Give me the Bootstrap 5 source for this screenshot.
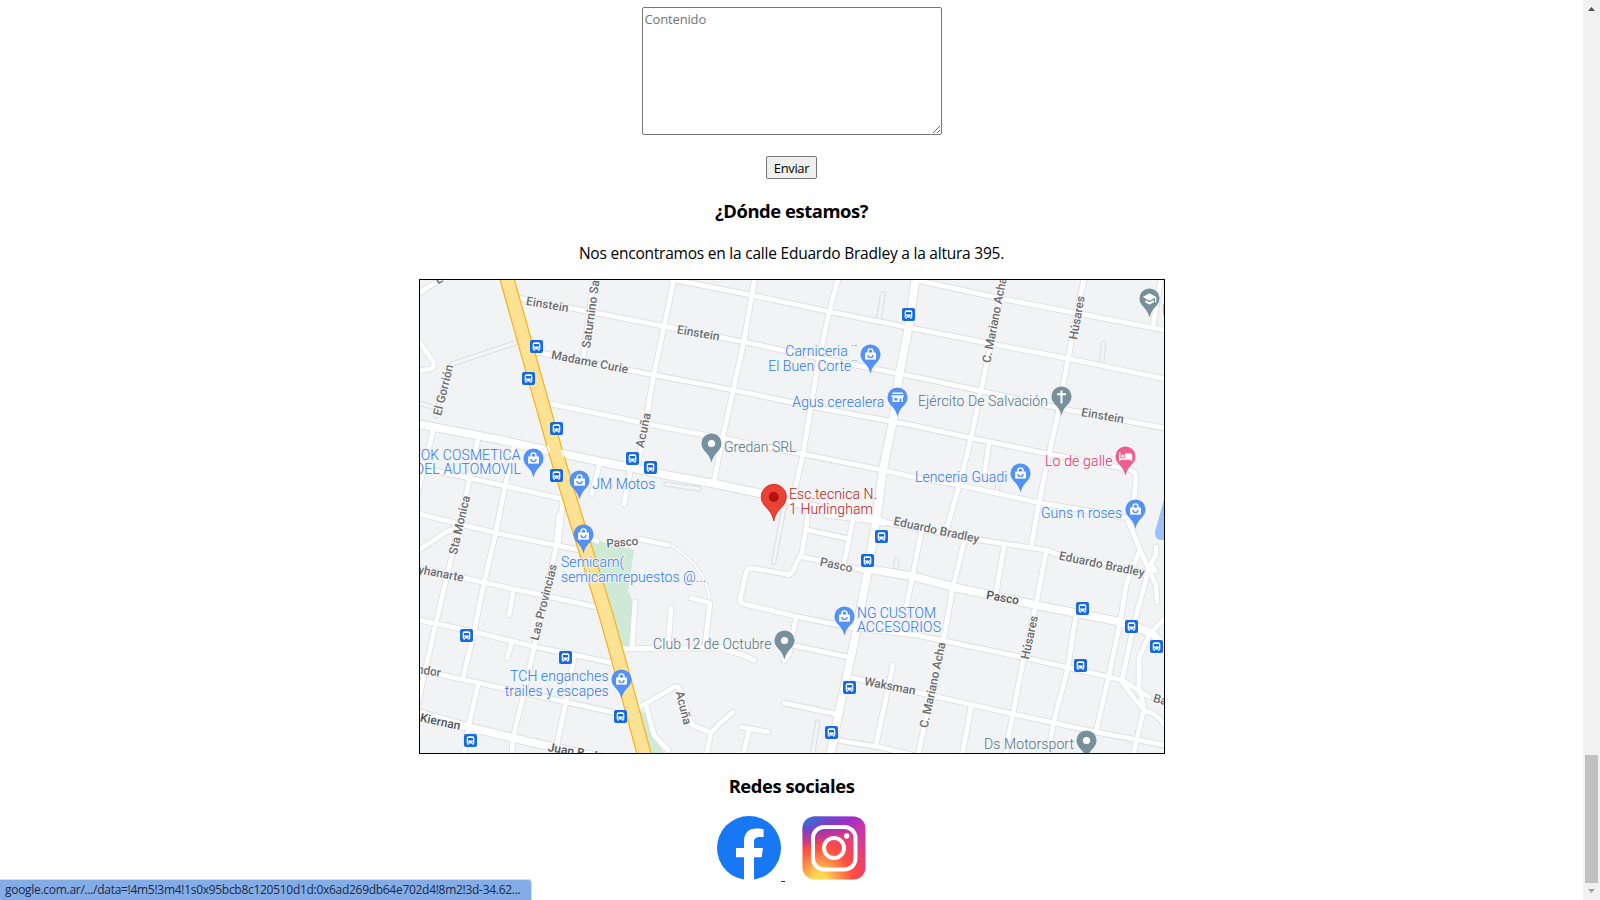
<!DOCTYPE html>
<html lang="es">
<head>
<meta charset="utf-8">
<meta name="viewport" content="width=device-width, initial-scale=1">
<title>Contacto</title>
<link href="https://cdn.jsdelivr.net/npm/bootstrap@5.3.0/dist/css/bootstrap.min.css" rel="stylesheet">
<style>
  body { font-family: "Open Sans", "Noto Sans", sans-serif; font-size: 16px; color: #000; background: #fff; height: 900px; }
  .message-box { width: 300px; height: 128px; margin-top: 7px; padding: 2px; border: 1px solid #767676; border-radius: 2px; font-size: 13px; line-height: 18px; letter-spacing: -.15px; resize: both; }
  .message-box::placeholder { color: #757575; }
  .send-btn { width: 51px; height: 23px; margin-top: 21px; border: 1px solid #767676; border-radius: 2px; background: #efefef; font-size: 13px; line-height: 20px; letter-spacing: -.35px; padding: 1px 0 0; color: #000; }
  .section-title { font-size: 18.4px; font-weight: 700; line-height: 25px; letter-spacing: -.43px; margin: 19px 0 0; }
  .address { font-size: 15.5px; line-height: 21px; letter-spacing: -.22px; margin: 20px 0 15px; }
  .map-frame { width: 746px; height: 475px; border: 1px solid #000; }
  .socials { margin-top: 18px; }
  .link-gap { width: 21px; height: 66px; }
  .link-gap i { width: 4px; height: 1px; background: #551a8b; }
  .scroll-track { width: 17px; background: #f1f1f1; }
  .scroll-thumb { width: 13px; height: 128px; background: #c1c1c1; }
  .url-status { width: 532px; height: 21px; background: #84ade8; border-top: 1px solid #d6d9e0; border-right: 1px solid #d6d9e0; border-radius: 0 4px 0 0; font-size: 12px; line-height: 20px; padding-left: 5px; color: #1d2940; white-space: nowrap; letter-spacing: -.29px; }
  .roads { fill: none; stroke-linecap: round; stroke-linejoin: round; }
  .poi { font: 300 14px Roboto, sans-serif; paint-order: stroke; stroke: #f1f3f4; stroke-width: 2px; stroke-linejoin: round; }
  .street { font: 500 12px Roboto, sans-serif; fill: #6a6c70; text-anchor: middle; paint-order: stroke; stroke: #f7f8f9; stroke-width: 2px; stroke-linejoin: round; }
  .street .main { fill: #505256; }
</style>
</head>
<body class="d-flex overflow-hidden">
<main class="flex-grow-1 d-flex flex-column align-items-center">
  <textarea class="message-box d-block" placeholder="Contenido"></textarea>
  <button class="send-btn" type="button">Enviar</button>
  <h3 class="section-title">¿Dónde estamos?</h3>
  <p class="address">Nos encontramos en la calle Eduardo Bradley a la altura 395.</p>
  <a class="map-frame d-block" href="#">
  <svg class="d-block" width="744" height="473" viewBox="420 280 744 473">
    <defs>
      <g id="service">
        <path d="M436 416Q442 385 452 364L516 342.7M419 403L436 408M882.7 294L879 319M1103.7 343L1101.7 363M999 476L997 491M666 484L699 489M784 508L773.7 562M896.7 560L896 567M817.7 722L812.7 753"/>
      </g>
      <g id="minor">
        <path d="M519 298L666 326.7L744 342L819 358L916 377L981 391L1063 409L1164 428"/>
        <path d="M670 279L753 295.5L831 312L916 329L1068 358.7L1164 378.7M920 281L1003 299L1164 330"/>
        <path d="M536 352L654 375L733 390L809 406L916 426L971 438L1049 454L1127 469Q1137 471 1136 480L1133 509"/>
        <path d="M549 403.7L666 427.7L803 454L882 470L916 477.7L959 485L1039 502.7L1089 511L1127 518L1141 552L1149 570L1156 585L1157 602"/>
        <path d="M1156 547V555L1151 563L1155 571L1149 570"/>
        <path d="M419 467.7L469 478L563 499L558 545M419 514L496 533L579 550M419 550L446 532L458 527"/>
        <path d="M419 568L486 583L549 596.7L596 607M419 620L473 631.7L536 647L613 663M419 670L479 683L566 702L616 713"/>
        <path d="M433 431L418 492M478 439L464 505L449 568L436 623L422.7 681L418 703M513 449L499 516L496 532L484 583L474 632L463 678"/>
        <path d="M478 685L468 728L464 756M559 515L556 548L534 648L523 697L513 738L512 756M574 658L566 702L556 748"/>
        <path d="M594 279L583 359M674 279L654 374L646 419L638 464M754.5 279L744 341L733 391L723 436L714 482M838 279L829 313L819 358L811 406L803 454L791 508"/>
        <path d="M1004.5 279L981 391L971 438L959 486L945 535M964 542L953 587L943 642L918 755M922 529L904 618"/>
        <path d="M1084 279L1068 359L1059 409L1049 454L1039 503L1031 547M1046 552L1036 605L1023 662L1013 713L1005 756M1004 547L996 593"/>
        <path d="M1076 615L1068 667L1053 725L1048 756M1147 575L1133 628L1122 680M1139 552L1126 585L1121 618L1109 675L1096 732M1161 279L1153 326"/>
        <path d="M883 522L979 540L1046 550L1059 555L1146 573M803 557L863 570M826 515L883 522"/>
        <path d="M1166 617L1149 635L1139 658V688L1144 708L1133 756M849 627L916 635L1026 658L1122 680L1149 697M1122 682L1134 698L1146 712Q1155 711 1166 727"/>
        <path d="M853 678L916 692L1013 714L1096 732L1164 745M971 707L962 756M836 740L879 747L916 756M893 665L876 745M784 703L836 714"/>
        <path d="M809 508L802 553Q795 565 793 571Q790 576 786 574L751 568Q747 568 746 573L740 599Q740 603 744 604L799 617L849 627"/>
        <path d="M808 530L849 539M853 520L844 563M796 617L791 643L789 654L784 661M791 645L848 657"/>
        <path d="M590 538L597 541M639 539L668 545M691 598L710 603L705 645M622 649L666 648L722 648Q730 652 743 655L754 660M635 602L632 648M671 608L668 648"/>
        <path d="M638 708L674 687Q679 685 681 693L692 725L711 733L706 756M733 712L719 724L711 733M741 727L768 732M749 730L743 756M646 705L654 735L668 750"/>
        <path d="M513 593L509 615M511 645L507 658M989 443L985 471M599 466L592 494M630 473L624 504M419 293L441 279M415 336L433 361Q436 367 430 369L415 372"/>
      </g>
      <g id="major">
        <path d="M418 424L496 439L559 453L666 475L716 484L763 494L800 504L883 522"/>
        <path d="M916 276L909 326L899 376L893 421L883 469L876 522L867 575L853 648L839 712L830 756"/>
        <path d="M863 568L916 577L953 587L1036 605L1116 621L1136 627L1152 633L1161 643M418 713L463 725.7L513 738L566 750L600 757"/>
      </g>
      <g id="bus">
        <rect x="-6.5" y="-6.5" width="13" height="13" rx="2" fill="#1769e0"/>
        <path d="M-3.8 3V-2.5Q-3.8-4.2-2-4.2H2Q3.8-4.2 3.8-2.5V3H3V4.3H1.7V3H-1.7V4.3H-3V3Z" fill="#fff"/>
        <path d="M-2.6-2.5H2.6V.1H-2.6ZM-2.6 1.2H-1.4V2.2H-2.6ZM1.4 1.2H2.6V2.2H1.4Z" fill="#1769e0"/>
      </g>
      <path id="pin" d="M0 19C-1.6 13-4 10.5-7.3 7A10.1 10.1 0 1 1 7.3 7C4 10.5 1.6 13 0 19Z"/>
      <g id="bag">
        <use href="#pin" fill="#5491f5"/>
        <path d="M-5.4-2H5.4V5.1H-5.4Z" fill="#fff"/>
        <path d="M-2.5-1.5V-3.1A2.5 2.5 0 0 1 2.5-3.1V-1.5" fill="none" stroke="#fff" stroke-width="1.4"/>
        <path d="M-2.5.6A2.5 2.5 0 0 0 2.5.6" fill="none" stroke="#5491f5" stroke-width="1.4"/>
      </g>
      <g id="dot"><use href="#pin" fill="#78909c"/><circle r="3.6" fill="#fff"/></g>
    </defs>

    <rect x="420" y="280" width="744" height="473" fill="#f1f3f4"/>
    <path d="M588 538L634 550L628 591L633 602L629 647H617ZM640 709L646 715L655 740L665 754H645Z" fill="#ceead6"/>
    <path d="M1166 492L1155 532Q1155 540 1161 540H1166Z" fill="#9cc0f9"/>

    <g class="roads">
      <path d="M666 544Q675 545 694 564Q709 582 710 602" stroke="#dfe1e5" stroke-width="3.6"/>
      <path d="M666 544Q675 545 694 564Q709 582 710 602" stroke="#fff" stroke-width="2"/>
      <use href="#service" stroke="#dddfe3" stroke-width="5.4"/>
      <use href="#service" stroke="#f4f5f6" stroke-width="3.2"/>
      <use href="#minor" stroke="#dcdee3" stroke-width="6.4"/>
      <use href="#major" stroke="#dcdee3" stroke-width="9.6"/>
      <use href="#minor" stroke="#fff" stroke-width="4.8"/>
      <use href="#major" stroke="#fff" stroke-width="7.8"/>
      <path d="M504.5 270L556 453L575 516L606 615L620 665L646 761" stroke="#f7b01f" stroke-width="15"/>
      <path d="M504.5 270L556 453L575 516L606 615L620 665L646 761" stroke="#fde293" stroke-width="12.6"/>
      <path d="M547.5 445L549.5 452M562 450L564 457" stroke="#fff" stroke-width="1.6" stroke-linecap="butt"/>
    </g>

    <g class="street">
      <text transform="translate(547.3 304.5) rotate(10)" y="4" textLength="43">Einstein</text>
      <text transform="translate(698.3 333) rotate(10)" y="4" textLength="43">Einstein</text>
      <text transform="translate(1102.7 415.7) rotate(10)" y="4" textLength="43">Einstein</text>
      <text transform="translate(589.7 362) rotate(11)" y="4" textLength="78">Madame Curie</text>
      <text transform="translate(586 348) rotate(-82)" y="4" style="text-anchor:start">Saturnino Sa</text>
      <text transform="translate(443.3 390) rotate(-76)" y="4" textLength="52">El Gorrión</text>
      <text transform="translate(643.3 430.3) rotate(-78)" y="4" textLength="35">Acuña</text>
      <text transform="translate(459.5 525) rotate(-77)" y="4" textLength="60">Sta Monica</text>
      <text transform="translate(543.7 602.3) rotate(-76)" y="4" textLength="78">Las Provincias</text>
      <text transform="translate(441 573.5) rotate(11)" y="4" textLength="46">yhanarte</text>
      <text transform="translate(429 671) rotate(9)" y="4" textLength="24">ndor</text>
      <text class="main" transform="translate(440.3 721.7) rotate(12)" y="4" textLength="41">Kiernan</text>
      <text class="main" transform="translate(548 747) rotate(10)" y="4" style="text-anchor:start">Juan B. Justo</text>
      <text transform="translate(622.3 542.3) rotate(-5)" y="4" textLength="32">Pasco</text>
      <text transform="translate(836.3 565) rotate(12)" y="4" textLength="33">Pasco</text>
      <text class="main" transform="translate(1002.7 597.7) rotate(10)" y="4" textLength="33">Pasco</text>
      <text transform="translate(936.5 530) rotate(12)" y="4" textLength="87">Eduardo Bradley</text>
      <text transform="translate(1102 564.3) rotate(11.5)" y="4" textLength="87">Eduardo Bradley</text>
      <text transform="translate(1077 317.7) rotate(-80)" y="4" textLength="44">Húsares</text>
      <text transform="translate(1029.5 637.3) rotate(-78)" y="4" textLength="44">Húsares</text>
      <text transform="translate(994.5 320) rotate(-79)" y="4" textLength="87">C. Mariano Acha</text>
      <text transform="translate(932.7 685) rotate(-78)" y="4" textLength="87">C. Mariano Acha</text>
      <text transform="translate(890 686) rotate(11)" y="4" textLength="52">Waksman</text>
      <text transform="translate(683.5 707.7) rotate(76)" y="4" textLength="34">Acuña</text>
      <text transform="translate(1153.5 698) rotate(15)" y="4" style="text-anchor:start">Bar</text>
      <text transform="translate(436 281) rotate(-32)" y="4" style="text-anchor:start">La</text>
    </g>

    <use href="#bus" x="536.5" y="346.5"/><use href="#bus" x="528.5" y="378.5"/><use href="#bus" x="556.5" y="428.5"/>
    <use href="#bus" x="556.5" y="475.5"/><use href="#bus" x="632.5" y="458.5"/><use href="#bus" x="650.5" y="467.5"/>
    <use href="#bus" x="908.5" y="314.5"/><use href="#bus" x="466.5" y="635.5"/><use href="#bus" x="565.5" y="657.5"/>
    <use href="#bus" x="620.5" y="716.5"/><use href="#bus" x="470.5" y="740.5"/><use href="#bus" x="881.5" y="536.5"/>
    <use href="#bus" x="867.5" y="560.5"/><use href="#bus" x="849.5" y="687.5"/><use href="#bus" x="831.5" y="732.5"/>
    <use href="#bus" x="1082.5" y="608.5"/><use href="#bus" x="1131.5" y="626.5"/><use href="#bus" x="1156.5" y="646.5"/>
    <use href="#bus" x="1080.5" y="665.5"/>

    <use href="#bag" x="870.5" y="354.5"/><use href="#bag" x="533.5" y="458.5"/><use href="#bag" x="579.5" y="480.5"/>
    <use href="#bag" x="1020.5" y="473.5"/><use href="#bag" x="1135.5" y="509.5"/><use href="#bag" x="583.5" y="534.5"/>
    <use href="#bag" x="621.5" y="679.5"/><use href="#bag" x="844.5" y="616.5"/>
    <use href="#dot" x="711.5" y="443.5"/><use href="#dot" x="784.5" y="640.5"/><use href="#dot" x="1086.5" y="740.5"/>
    <g transform="translate(897.5 397.5)">
      <use href="#pin" fill="#5491f5"/>
      <path d="M-5-4.2H5.4M-6-1.5H6.4" stroke="#fff" stroke-width="1.5"/>
      <path d="M-5-1V4.6H2V1H4V4.6H5.4V-1ZM-3.2.6H0V3H-3.2Z" fill="#fff" fill-rule="evenodd"/>
    </g>
    <g transform="translate(1061.5 396.5)">
      <use href="#pin" fill="#78909c"/>
      <path d="M0-6V7M-4.5-2.2H4.5" stroke="#fff" stroke-width="2"/>
    </g>
    <g transform="translate(1149.5 298.5)">
      <use href="#pin" fill="#78909c"/>
      <path d="M-6.8-1.5L0-5.2L6.8-1.5V4H5.6V-.8L0 2.2ZM-4.2 1.4L0 3.7L4.2 1.4V4L0 6L-4.2 4Z" fill="#fff"/>
    </g>
    <g transform="translate(1125.5 456.5)">
      <use href="#pin" fill="#ee5f90"/>
      <path d="M-5.8-4V4.4M-5.8 2.5H6V4.4V-.5Q6-2.6 4-2.6H0V2" fill="none" stroke="#fff" stroke-width="1.4"/>
      <path d="M0-2.6H4Q6-2.6 6-.5V2H0Z" fill="#fff"/><circle cx="-2.8" cy="-.5" r="1.6" fill="#fff"/>
    </g>
    <g transform="translate(773.8 497)">
      <path d="M0 24C-1.5 16-5 13.5-9.2 8.5A12.6 12.6 0 1 1 9.2 8.5C5 13.5 1.5 16 0 24Z" fill="#ea4335" stroke="#c5221f" stroke-width=".8"/>
      <circle r="5" fill="#b31412"/>
    </g>

    <g class="poi" fill="#2f79ea">
      <text x="785.3" y="356" textLength="72">Carniceria ¨</text>
      <text x="768.3" y="371" textLength="89">El Buen Corte¨</text>
      <text x="792.3" y="407" textLength="92">Agus cerealera</text>
      <text x="915" y="482" textLength="92.5">Lenceria Guadi</text>
      <text x="1041" y="518" textLength="81">Guns n roses</text>
      <text x="520.5" y="460" text-anchor="end" textLength="108">TOK COSMETICA</text>
      <text x="521" y="474" text-anchor="end" textLength="106">DEL AUTOMOVIL</text>
      <text x="592.3" y="489" textLength="63">JM Motos</text>
      <text x="561" y="567" textLength="63">Semicam(</text>
      <text x="561" y="582" textLength="145">semicamrepuestos @...</text>
      <text x="510" y="681" textLength="98.5">TCH enganches</text>
      <text x="504.7" y="696" textLength="104">trailes y escapes</text>
      <text x="857" y="618" textLength="79">NG CUSTOM</text>
      <text x="857" y="632" textLength="84">ACCESORIOS</text>
    </g>
    <g class="poi" fill="#567482">
      <text x="724" y="452" textLength="72.5">Gredan SRL</text>
      <text x="918" y="406" textLength="130">Ejército De Salvación</text>
      <text x="653" y="649" textLength="118.5">Club 12 de Octubre</text>
      <text x="984" y="749" textLength="90">Ds Motorsport</text>
      <text x="1162.2" y="315">E</text>
    </g>
    <g class="poi" fill="#bd1b20">
      <text x="789" y="499" textLength="88">Esc.tecnica N.</text>
      <text x="789" y="514" textLength="84">1 Hurlingham</text>
    </g>
    <text class="poi" fill="#e8306c" x="1045" y="466" textLength="67.5">Lo de galle</text>
  </svg>
  </a>
  <h3 class="section-title">Redes sociales</h3>
  <div class="socials d-flex align-items-start">
    <svg width="64" height="64" viewBox="0 0 64 64">
      <circle cx="32" cy="32" r="32" fill="#1877f2"/>
      <path d="M27 64V41.3H19V32H27V25C27 16.7 31.8 12.4 39.4 12.4C43 12.4 46.6 13 46.6 13V21H42.4C38.4 21 37 23.4 37 26V32H46L44.6 41.3H37V64Z" fill="#fff"/>
    </svg>
    <span class="link-gap d-flex align-items-end"><i></i></span>
    <svg width="64" height="64" viewBox="0 0 64 64">
      <defs>
        <radialGradient id="warm" cx=".27" cy="1.02" r="1"><stop offset="0" stop-color="#ffdd55"/><stop offset=".12" stop-color="#ffd454"/><stop offset=".5" stop-color="#ff543e"/><stop offset=".62" stop-color="#f8484f"/><stop offset="1" stop-color="#c837ab"/></radialGradient>
        <radialGradient id="cool" gradientUnits="userSpaceOnUse" cx="0" cy="0" r="1" gradientTransform="translate(-4 2) rotate(-12) scale(85 32)"><stop offset="0" stop-color="#3771c8"/><stop offset=".2" stop-color="#3b6bd2"/><stop offset="1" stop-color="#6600ff" stop-opacity="0"/></radialGradient>
      </defs>
      <rect x=".5" y=".5" width="63" height="63" rx="12" fill="url(#warm)"/>
      <rect x=".5" y=".5" width="63" height="63" rx="12" fill="url(#cool)"/>
      <rect x="11" y="11" width="42.5" height="42.5" rx="11" fill="none" stroke="#fff" stroke-width="4"/>
      <circle cx="32" cy="32" r="10" fill="none" stroke="#fff" stroke-width="4"/>
      <circle cx="44.7" cy="20" r="2.7" fill="#fff"/>
    </svg>
  </div>
</main>
<aside class="scroll-track d-flex flex-column align-items-center justify-content-between flex-shrink-0 h-100">
  <svg width="17" height="17"><path d="M5 11H12L8.5 7Z" fill="#505050"/></svg>
  <div class="mt-auto scroll-thumb"></div>
  <svg width="17" height="17"><path d="M5 6H12L8.5 10Z" fill="#a3a3a3"/></svg>
</aside>
<div class="url-status position-absolute bottom-0 start-0">google.com.ar/.../data=!4m5!3m4!1s0x95bcb8c120510d1d:0x6ad269db64e702d4!8m2!3d-34.62...</div>
<script src="https://cdn.jsdelivr.net/npm/bootstrap@5.3.0/dist/js/bootstrap.bundle.min.js"></script>
</body>
</html>
